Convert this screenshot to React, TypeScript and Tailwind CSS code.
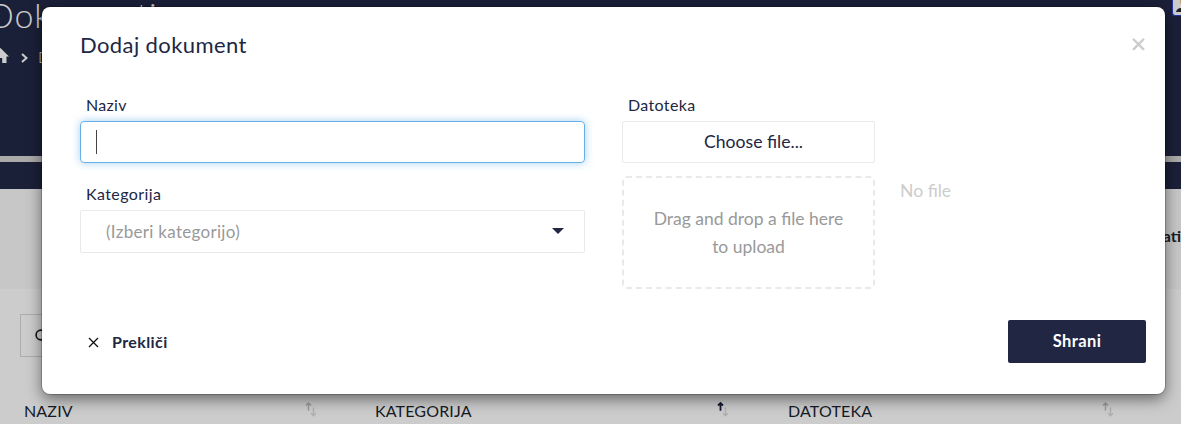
import React from "react";

function SortIcon({ active = false }: { active?: boolean }) {
  return (
    <svg width="12" height="16" viewBox="0 0 12 16" fill="none" strokeWidth="1.4" className="shrink-0">
      <path d="M3.5 9.8V2M1 4.5l2.5-2.5L6 4.5" stroke={active ? "#161b33" : "#999"} strokeWidth={active ? 1.8 : 1.4} />
      <path d="M8.5 6.5v8M6 12.3l2.5 2.5 2.5-2.5" stroke="#b0b0b0" />
    </svg>
  );
}

function Column({ label, width, active }: { label: string; width: string; active?: boolean }) {
  return (
    <div className={`flex shrink-0 items-start justify-between ${width}`}>
      <span className="text-[16px] leading-[20px] tracking-[0.15px]">{label}</span>
      <SortIcon active={active} />
    </div>
  );
}

function Backdrop() {
  return (
    <div className="flex h-full w-full flex-col bg-[#cccccc] text-[#161b26]">
      <header className="flex h-[156px] shrink-0 justify-between bg-[#1b2039] text-[#cccccc]">
        <div className="flex flex-col">
          <h1 className="-ml-[12px] -mt-[4px] h-[40px] text-[34px] font-light leading-[38px] tracking-[0.8px]">Dokumenti</h1>
          <nav className="mt-[11px] flex h-[20px] items-center text-[16px]">
            <svg width="17" height="18" viewBox="0 0 17 18" className="-ml-[8px] shrink-0" fill="currentColor">
              <path d="M8.5 0 0 8.5h2.5V15h4.3v-5h3.4v5h4.3V8.5H17z" />
            </svg>
            <svg width="8" height="12" viewBox="0 0 8 12" className="ml-[12px] mt-[2px]" fill="none" stroke="currentColor" strokeWidth="2">
              <path d="m1 2 4.5 4L1 10" />
            </svg>
            <span className="ml-[9px] font-light">D</span>
          </nav>
        </div>
        <div className="h-[16px] w-[9px] overflow-hidden rounded-bl-[3px] border-b border-l border-[#2637a8] bg-[#cccccc]">
          <svg width="12" height="16" viewBox="0 0 12 16">
            <path d="M7 0h5v5H9Q6 4 7 0" fill="#c4a078" />
            <path d="M3 12q1-4 5-4h4v4z" fill="#20202a" />
          </svg>
        </div>
      </header>
      <div className="h-[6px] shrink-0 bg-[#aaaaaa]" />
      <div className="h-[27px] shrink-0 bg-[#1b2039]" />
      <div className="flex h-[100px] shrink-0 justify-end bg-[#c7c7c7] pt-[37px]">
        <span className="whitespace-nowrap text-[16px] font-bold leading-[20px]">ati</span>
      </div>
      <div className="flex flex-1 flex-col pt-[25px]">
        <div className="ml-[20px] flex h-[43px] w-[300px] shrink-0 items-center border border-[#adadad] pl-[14px]">
          <svg width="13" height="13" viewBox="0 0 13 13" fill="none" stroke="#111" strokeWidth="1.6">
            <circle cx="6" cy="6" r="4.9" />
            <path d="m9.5 9.5 3 3" />
          </svg>
        </div>
        <div className="ml-[24px] mt-[44px] flex">
          <Column label="NAZIV" width="w-[293px]" />
          <div className="w-[58px] shrink-0" />
          <Column label="KATEGORIJA" width="w-[354px]" active />
          <div className="w-[59px] shrink-0" />
          <Column label="DATOTEKA" width="w-[326px]" />
        </div>
      </div>
    </div>
  );
}

export default function App() {
  return (
    <div className="relative h-[424px] w-[1181px] overflow-hidden font-['Lato',sans-serif]">
      <Backdrop />
      <section className="absolute left-[42px] top-[7px] flex h-[387px] w-[1123px] flex-col rounded-[8px] bg-white text-[#212743] shadow-[0_0_0_1px_rgba(0,0,0,0.2),0_5px_15px_rgba(0,0,0,0.5)]">
        <div className="flex h-[80px] shrink-0 justify-between pl-[38px] pr-[20px] pt-[24px]">
          <h2 className="text-[22px] leading-[28px] tracking-[0.4px]">Dodaj dokument</h2>
          <svg width="14" height="14" viewBox="0 0 14 14" className="mt-[7px]" fill="none" stroke="#cccccc" strokeWidth="2.4" strokeLinecap="round">
            <path d="m2.7 1.5 9.6 9.6m0-9.6-9.6 9.6" />
          </svg>
        </div>
        <div className="flex pl-[38px]">
          <div className="flex w-[505px] flex-col text-[16px]">
            <label className="h-[34px] pl-[6px] pt-[8px] leading-[20px] tracking-[0.3px]">Naziv</label>
            <div className="flex h-[42px] items-center rounded-[4px] border border-[#66afe9] pl-[15px] shadow-[0_0_8px_rgba(102,175,233,0.6)]">
              <div className="h-[24px] w-px bg-[#444]" />
            </div>
            <label className="mt-[13px] h-[34px] pl-[6px] pt-[8px] leading-[20px] tracking-[0.4px]">Kategorija</label>
            <div className="flex h-[43px] items-center justify-between rounded-[2px] border border-[#e9e9e9] pl-[25px] pr-[20px] text-[#999999]">
              <span className="text-[17px] tracking-[0.3px]">(Izberi kategorijo)</span>
              <svg width="12" height="6" viewBox="0 0 12 6" fill="#212743" className="-mt-[2px]">
                <path d="M0 0h12L6 6z" />
              </svg>
            </div>
          </div>
          <div className="ml-[37px] flex w-[253px] flex-col">
            <label className="h-[34px] pl-[6px] pt-[8px] text-[16px] leading-[20px] tracking-[0.35px]">Datoteka</label>
            <div className="flex h-[42px] items-center justify-center rounded-[2px] border border-[#e9e9e9] pl-[10px] text-[17.6px]">Choose file...</div>
            <div className="mt-[13px] flex h-[113px] flex-col items-center justify-center rounded-[4px] border-2 border-dashed border-[#e9e9e9] text-[17.5px] leading-[28px] text-[#999999]">
              <span>Drag and drop a file here</span>
              <span>to upload</span>
            </div>
          </div>
          <span className="ml-[25px] mt-[94px] text-[17.6px] leading-[20px] text-[#cccccc]">No file</span>
        </div>
        <footer className="mt-auto flex h-[74px] shrink-0 justify-between pl-[46px] pr-[19px]">
          <div className="flex h-[44px] items-center font-bold">
            <svg width="11" height="11" viewBox="0 0 11 11" fill="none" stroke="#111" strokeWidth="1.3">
              <path d="m1 1 9 9m0-9-9 9" />
            </svg>
            <span className="ml-[13px] text-[16px] tracking-[0.4px]">Prekliči</span>
          </div>
          <button className="h-[43px] w-[138px] rounded-[2px] bg-[#212743] pb-[1px] text-[16.5px] font-bold tracking-[0.4px] text-white">Shrani</button>
        </footer>
      </section>
    </div>
  );
}
